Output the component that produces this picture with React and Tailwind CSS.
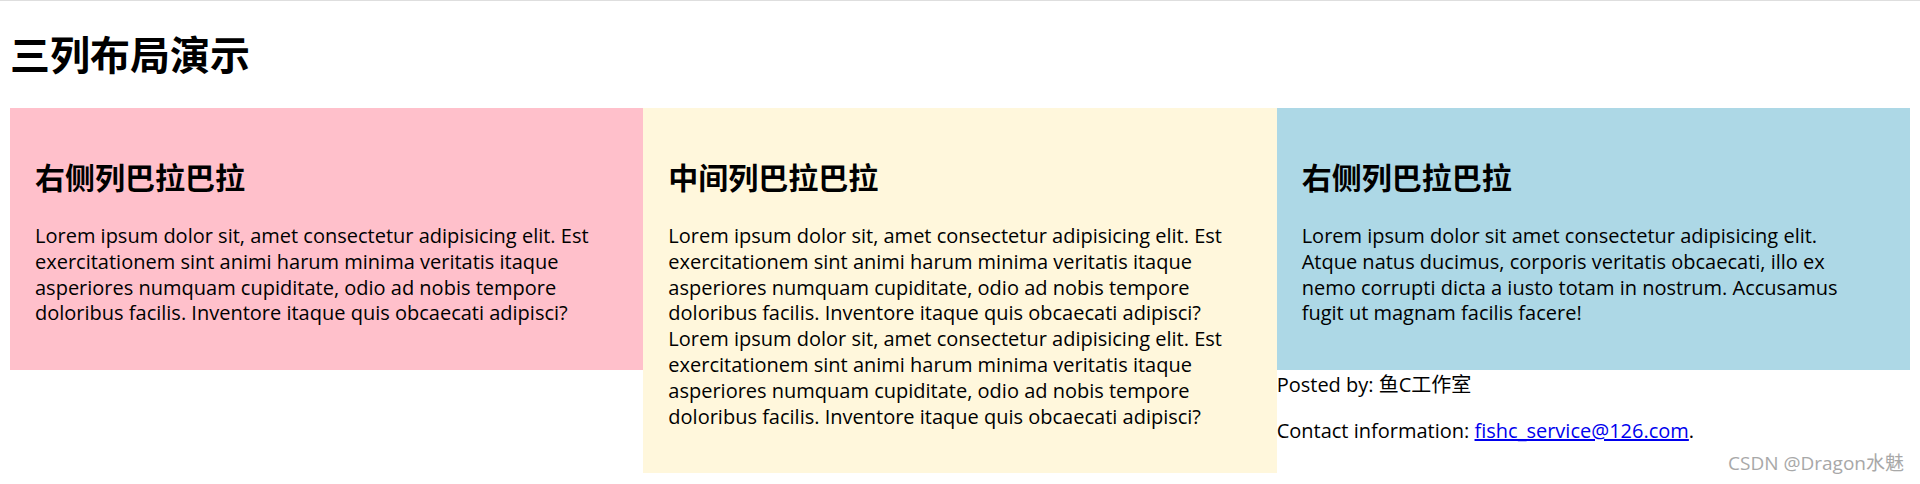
import React from 'react';

const lorem = [
  'Lorem ipsum dolor sit, amet consectetur adipisicing elit. Est',
  'exercitationem sint animi harum minima veritatis itaque',
  'asperiores numquam cupiditate, odio ad nobis tempore',
  'doloribus facilis. Inventore itaque quis obcaecati adipisci?',
];

const loremRight = [
  'Lorem ipsum dolor sit amet consectetur adipisicing elit.',
  'Atque natus ducimus, corporis veritatis obcaecati, illo ex',
  'nemo corrupti dicta a iusto totam in nostrum. Accusamus',
  'fugit ut magnam facilis facere!',
];

// Renders each line on its own so the wrapping matches the original
const Lines = ({ lines }) => (
  <p className="text-[20px] leading-[25.8px] whitespace-nowrap">
    {lines.map((line, i) => (
      <React.Fragment key={i}>
        {line}
        {i < lines.length - 1 && <br />}
      </React.Fragment>
    ))}
  </p>
);

const Column = ({ title, lines, className }) => (
  <div className={`px-[25px] pt-[50px] pb-[44px] ${className}`}>
    <h2 className="text-[30px] font-bold leading-[40px] mb-[25px]">{title}</h2>
    <Lines lines={lines} />
  </div>
);

const App = () => {
  return (
    <div className="relative min-h-screen bg-white text-black border-t border-[#dedede] font-['Open_Sans','Noto_Sans_CJK_SC',sans-serif]">
      <div className="px-[10px]">
        <h1 className="text-[40px] font-bold leading-[53px] pt-[27px] pb-[27px]">三列布局演示</h1>

        <div className="grid grid-cols-3 items-start">
          <Column title="右侧列巴拉巴拉" lines={lorem} className="bg-[#ffc0cb]" />
          <Column title="中间列巴拉巴拉" lines={[...lorem, ...lorem]} className="bg-[#fff7dc]" />
          <div className="flex flex-col pb-[2px]">
            <Column title="右侧列巴拉巴拉" lines={loremRight} className="bg-[#add8e6]" />
            <p className="text-[20px] leading-[26px] mt-[2px]">Posted by: 鱼C工作室</p>
            <p className="text-[20px] leading-[26px] mt-[20px]">
              Contact information:{' '}
              <a href="mailto:fishc_service@126.com" className="text-[#0000ee] underline">
                fishc_service@126.com
              </a>
              .
            </p>
          </div>
        </div>
      </div>

      <div className="absolute right-[16px] bottom-[8px] text-[19px] leading-[26px] text-[#a8a8a8]">
        CSDN @Dragon水魅
      </div>
    </div>
  );
};

export default App;
